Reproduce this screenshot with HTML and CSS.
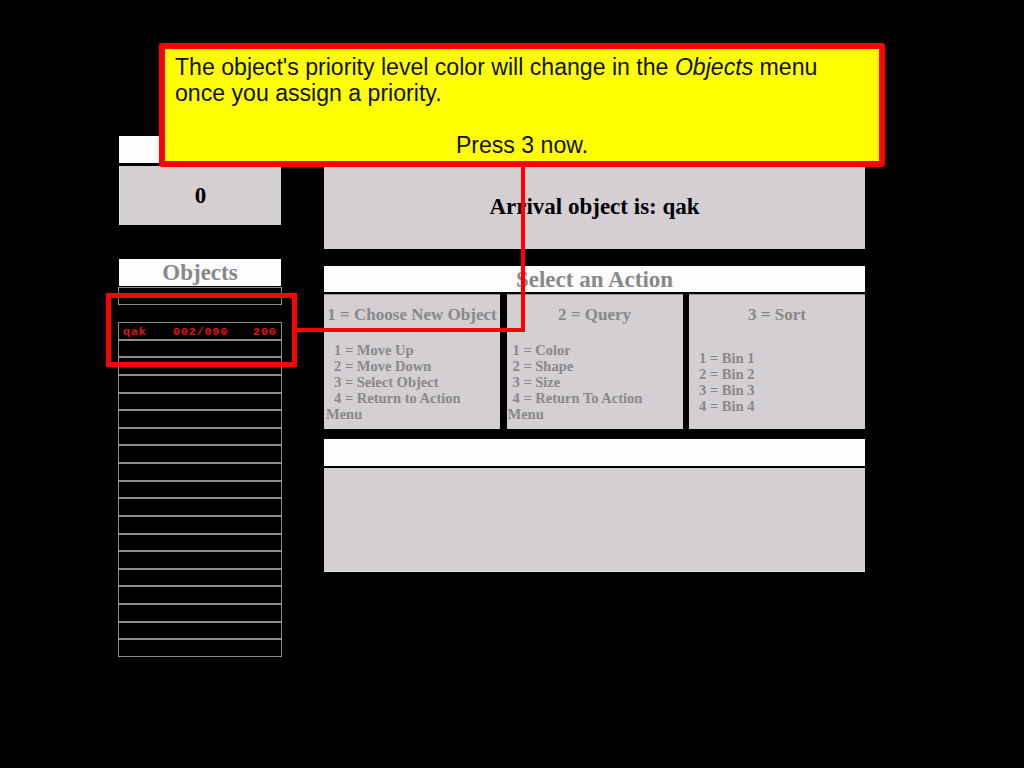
FILE: index.html
```html
<!DOCTYPE html>
<html>
<head>
<meta charset="utf-8">
<link rel="stylesheet" href="styles.css">
</head>
<body>
<div class="screen">
  <div class="left">
    <div class="hdr"></div>
    <div class="score">0</div>
    <div class="hdr objects-hdr">Objects</div>
    <div class="list">
      <div class="row"></div>
      <div class="row blank"></div>
      <div class="row item"><span class="c1">qak</span><span class="c2">002/090</span><span class="c3">200</span></div>
      <div class="row"></div>
      <div class="row"></div>
      <div class="row"></div>
      <div class="row"></div>
      <div class="row"></div>
      <div class="row"></div>
      <div class="row"></div>
      <div class="row"></div>
      <div class="row"></div>
      <div class="row"></div>
      <div class="row"></div>
      <div class="row"></div>
      <div class="row"></div>
      <div class="row"></div>
      <div class="row"></div>
      <div class="row"></div>
      <div class="row"></div>
      <div class="row"></div>
    </div>
  </div>
  <div class="main">
    <div class="arrival">Arrival object is: qak</div>
    <div class="hdr action-hdr">Select an Action</div>
    <div class="cols">
      <div class="col col1">
        <div class="col-title">1 = Choose New Object</div>
        <div class="col-items">
          <div>1 = Move Up</div>
          <div>2 = Move Down</div>
          <div>3 = Select Object</div>
          <div>4 = Return to Action Menu</div>
        </div>
      </div>
      <div class="col col2">
        <div class="col-title">2 = Query</div>
        <div class="col-items">
          <div>1 = Color</div>
          <div>2 = Shape</div>
          <div>3 = Size</div>
          <div>4 = Return To Action Menu</div>
        </div>
      </div>
      <div class="col col3">
        <div class="col-title">3 = Sort</div>
        <div class="col-items">
          <div>1 = Bin 1</div>
          <div>2 = Bin 2</div>
          <div>3 = Bin 3</div>
          <div>4 = Bin 4</div>
        </div>
      </div>
    </div>
    <div class="hdr msg-hdr"></div>
    <div class="msg"></div>
  </div>

  <div class="popup">
    <p>The object's priority level color will change in the <em>Objects</em> menu<br>once you assign a priority.</p>
    <p class="press">Press 3 now.</p>
  </div>
  <div class="line-v"></div>
  <div class="line-h"></div>
  <div class="highlight"></div>
</div>
</body>
</html>
```

FILE: styles.css
```css
html, body {
  margin: 0;
  padding: 0;
  background: #000;
}

.screen {
  position: relative;
  width: 1024px;
  height: 768px;
  box-sizing: border-box;
  padding: 136px 0 0 118px;
  display: flex;
  align-items: flex-start;
  gap: 42px;
  font-family: "Liberation Serif", "Times New Roman", serif;
  font-weight: bold;
  color: #888;
}

.left {
  width: 164px;
  display: flex;
  flex-direction: column;
}

.hdr {
  background: #fefcfe;
  height: 27px;
  font-size: 23px;
  line-height: 27px;
  text-align: center;
  color: #888;
}

.left .hdr {
  margin: 0 1px;
}

.score {
  margin: 3px 1px 0;
  height: 59px;
  background: #d3cfd3;
  border-left: 1px solid #e4e2e4;
  box-sizing: border-box;
  color: #000;
  font-size: 23px;
  display: flex;
  align-items: center;
  justify-content: center;
}

.objects-hdr {
  margin-top: 34px !important;
}

.list {
  margin-top: 1px;
  display: flex;
  flex-direction: column;
}

.row {
  height: 17.62px;
  box-sizing: border-box;
  border: 1px solid #8c8c8c;
  display: flex;
  align-items: center;
  padding: 1px 0 0 4px;
  font-family: "Liberation Mono", "Courier New", monospace;
  font-weight: bold;
  font-size: 11.5px;
  letter-spacing: 1px;
  color: #e81010;
}

.row.blank {
  border-color: #000;
}

.row .c1 { width: 50px; }
.row .c2 { width: 80px; }

.main {
  width: 541px;
  margin-top: 30px;
  display: flex;
  flex-direction: column;
}

.arrival {
  height: 83px;
  background: #d3cfd3;
  color: #000;
  font-size: 23px;
  display: flex;
  align-items: center;
  justify-content: center;
  padding-bottom: 2px;
  box-sizing: border-box;
}

.action-hdr {
  margin-top: 17px;
  height: 26px;
  line-height: 27px;
}

.cols {
  margin-top: 2px;
  display: grid;
  grid-template-columns: 176px 176px 176px;
  column-gap: 6.5px;
}

.col {
  height: 135px;
  background: #d3cfd3;
  border-top: 1px solid #9a989a;
  box-sizing: border-box;
  display: flex;
  flex-direction: column;
}

.col-title {
  height: 39px;
  padding-top: 8px;
  box-sizing: border-box;
  line-height: 24px;
  font-size: 17px;
  text-align: center;
}

.col-items {
  height: 95px;
  display: flex;
  flex-direction: column;
  justify-content: center;
  font-size: 14.5px;
  line-height: 16px;
  box-sizing: border-box;
}

.col1 .col-items { padding-left: 2px; }
.col1 .col-items div { text-indent: 8px; }
.col2 .col-items { padding: 0 8px 0 1px; }
.col2 .col-items div { text-indent: 5px; }
.col3 .col-items { padding-left: 10px; }

.msg-hdr {
  margin-top: 10px;
  height: 27px;
}

.msg {
  margin-top: 2px;
  height: 104px;
  background: #d3cfd3;
  border-bottom: 1px solid #e6e4e6;
  box-sizing: border-box;
}

.popup {
  position: absolute;
  left: 159px;
  top: 43px;
  width: 726px;
  height: 124px;
  box-sizing: border-box;
  border: 6px solid #ff0000;
  border-radius: 3px;
  background: #ffff00;
  padding: 5px 10px 0 10px;
  font-family: "Liberation Sans", Arial, sans-serif;
  font-weight: normal;
  font-size: 23.1px;
  line-height: 26px;
  color: #111;
}

.popup p {
  margin: 0;
}

.popup .press {
  margin-top: 26px;
  text-align: center;
}

.line-v {
  position: absolute;
  left: 521px;
  top: 166px;
  width: 4px;
  height: 166px;
  background: #ff0000;
}

.line-h {
  position: absolute;
  left: 296px;
  top: 328px;
  width: 229px;
  height: 4px;
  background: #ff0000;
}

.highlight {
  position: absolute;
  left: 106px;
  top: 293px;
  width: 191px;
  height: 74px;
  box-sizing: border-box;
  border: 5px solid #ff0000;
}
```
